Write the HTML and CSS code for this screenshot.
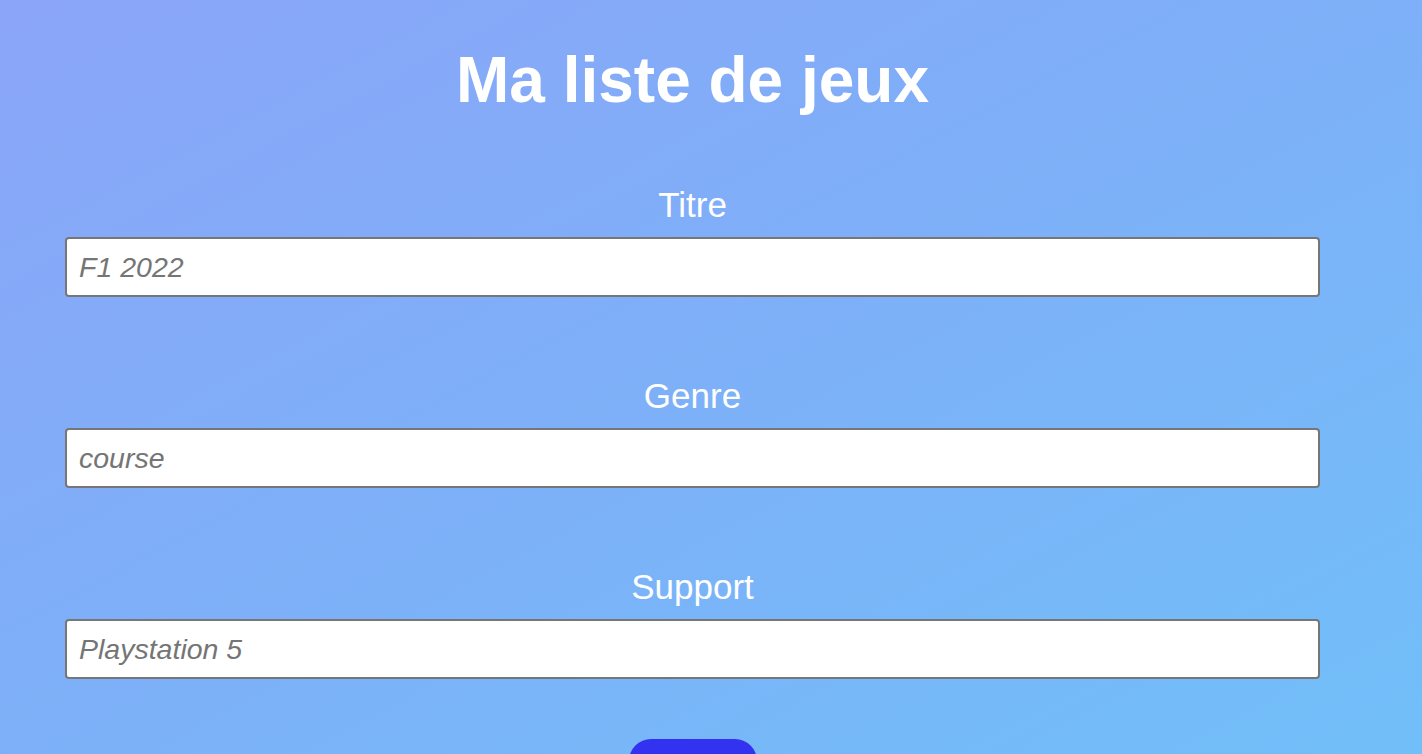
FILE: index.html
```html
<!DOCTYPE html>
<html lang="fr">
<head>
<meta charset="utf-8">
<title>Ma liste de jeux</title>
<link rel="stylesheet" href="styles.css">
</head>
<body>
<main class="page">
  <h1 class="title">Ma liste de jeux</h1>
  <form class="game-form">
    <div class="field">
      <label class="field-label" for="titre">Titre</label>
      <input class="field-input" id="titre" type="text" placeholder="F1 2022">
    </div>
    <div class="field">
      <label class="field-label" for="genre">Genre</label>
      <input class="field-input" id="genre" type="text" placeholder="course">
    </div>
    <div class="field">
      <label class="field-label" for="support">Support</label>
      <input class="field-input" id="support" type="text" placeholder="Playstation 5">
    </div>
    <button class="submit" type="submit">Ajouter</button>
  </form>
</main>
</body>
</html>
```
FILE: styles.css
```css
html, body {
  margin: 0;
  padding: 0;
}

body {
  font-family: "Liberation Sans", Arial, Helvetica, sans-serif;
  color: #ffffff;
  background: linear-gradient(to bottom right, #8ba5f8 0%, #7db0f8 50%, #71bff9 100%);
  background-attachment: fixed;
  min-height: 100vh;
}

.page {
  width: 1255px;
  margin-left: 65px;
  padding-bottom: 40px;
}

.title {
  margin: 43px 0 68px;
  font-size: 64px;
  font-weight: 700;
  line-height: 74px;
  text-align: center;
}

.game-form {
  display: flex;
  flex-direction: column;
  align-items: center;
  gap: 79px;
}

.field {
  display: flex;
  flex-direction: column;
  align-items: center;
  gap: 12px;
  width: 100%;
}

.field-label {
  font-size: 35px;
  line-height: 40px;
}

.field-input {
  box-sizing: border-box;
  width: 100%;
  height: 60px;
  margin: 0;
  padding: 0 12px;
  border: 2px solid #767676;
  border-radius: 4px;
  background: #ffffff;
  font-family: "Liberation Sans", Arial, sans-serif;
  font-size: 28.5px;
  font-style: italic;
  color: #333;
  outline: none;
}

.field-input::placeholder {
  color: #757575;
  font-style: italic;
  opacity: 1;
}

.game-form .submit {
  margin-top: -19px;
  width: 128px;
  height: 52px;
  border: none;
  border-radius: 22px;
  background: #3232f0;
  color: #ffffff;
  font-family: "Liberation Sans", Arial, sans-serif;
  font-size: 22px;
}
```
